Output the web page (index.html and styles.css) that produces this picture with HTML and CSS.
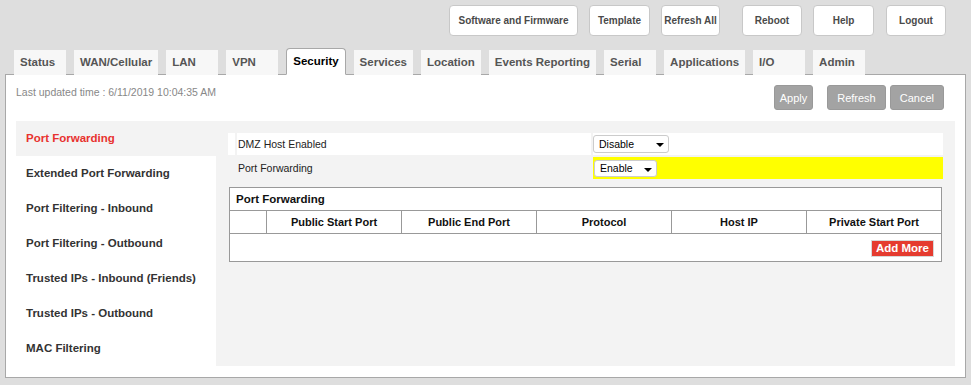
FILE: index.html
```html
<!DOCTYPE html>
<html lang="en">
<head>
    <meta charset="UTF-8">
    <title>Security - Port Forwarding</title>
    <link rel="stylesheet" href="styles.css">
</head>
<body>
    <div class="topbar">
        <button class="top-btn firmware">Software and Firmware</button>
        <button class="top-btn">Template</button>
        <button class="top-btn narrow">Refresh All</button>
        <button class="top-btn spaced">Reboot</button>
        <button class="top-btn">Help</button>
        <button class="top-btn logout">Logout</button>
    </div>

    <div class="tabs">
        <a class="tab">Status</a>
        <a class="tab">WAN/Cellular</a>
        <a class="tab">LAN</a>
        <a class="tab">VPN</a>
        <a class="tab active">Security</a>
        <a class="tab">Services</a>
        <a class="tab">Location</a>
        <a class="tab">Events Reporting</a>
        <a class="tab">Serial</a>
        <a class="tab">Applications</a>
        <a class="tab">I/O</a>
        <a class="tab">Admin</a>
    </div>

    <div class="panel">
        <div class="panel-head">
            <span class="updated">Last updated time : 6/11/2019 10:04:35 AM</span>
            <div class="actions">
                <button class="act-btn apply">Apply</button>
                <button class="act-btn">Refresh</button>
                <button class="act-btn">Cancel</button>
            </div>
        </div>

        <div class="main">
            <ul class="sidenav">
                <li class="active">Port Forwarding</li>
                <li>Extended Port Forwarding</li>
                <li>Port Filtering - Inbound</li>
                <li>Port Filtering - Outbound</li>
                <li>Trusted IPs - Inbound (Friends)</li>
                <li>Trusted IPs - Outbound</li>
                <li>MAC Filtering</li>
            </ul>

            <div class="content">
                <div class="form-row">
                    <span class="cell pad white"></span>
                    <span class="cell label white">DMZ Host Enabled</span>
                    <span class="cell value white">
                        <span class="dropdown wide">Disable</span>
                    </span>
                </div>
                <div class="form-row">
                    <span class="cell pad"></span>
                    <span class="cell label">Port Forwarding</span>
                    <span class="cell value highlight">
                        <span class="dropdown small">Enable</span>
                    </span>
                </div>

                <table class="pf-table">
                    <colgroup>
                        <col class="col-first">
                        <col><col><col><col><col>
                    </colgroup>
                    <tr>
                        <th class="title" colspan="6">Port Forwarding</th>
                    </tr>
                    <tr class="head">
                        <th></th>
                        <th>Public Start Port</th>
                        <th>Public End Port</th>
                        <th>Protocol</th>
                        <th>Host IP</th>
                        <th>Private Start Port</th>
                    </tr>
                    <tr>
                        <td colspan="6" class="add-cell">
                            <button class="add-btn">Add More</button>
                        </td>
                    </tr>
                </table>
            </div>
        </div>
    </div>
</body>
</html>
```

FILE: styles.css
```css
* {
    margin: 0;
    padding: 0;
    box-sizing: border-box;
}

body {
    font-family: 'Liberation Sans', Arial, sans-serif;
    background: #dedede;
    color: #333;
}

/* top buttons */
.topbar {
    display: flex;
    justify-content: flex-end;
    gap: 11px;
    padding: 5px 25px 0 0;
}

.top-btn {
    height: 31px;
    width: 61px;
    padding: 0;
    background: #fff;
    border: 1px solid #c8c8c8;
    border-radius: 4px;
    font-family: inherit;
    font-size: 10px;
    font-weight: 700;
    color: #4a4a4a;
}

.top-btn.firmware {
    width: 129px;
}

.top-btn.narrow {
    width: 59px;
}

.top-btn.spaced {
    width: 60px;
    margin-left: 11px;
}

.top-btn.logout {
    width: 60px;
    margin-left: 1px;
}

/* tabs */
.tabs {
    display: flex;
    align-items: flex-end;
    gap: 8px;
    margin: 12px 0 -1px 14px;
    position: relative;
    z-index: 1;
}

.tab {
    height: 25px;
    min-width: 52px;
    padding: 0 6px;
    line-height: 25px;
    background: #f7f7f7;
    color: #555;
    font-size: 11.5px;
    font-weight: 700;
}

.tab.active {
    height: 27px;
    line-height: 25px;
    background: #fff;
    color: #000;
    border: 1px solid #a8a8a8;
    border-bottom: 1px solid #fff;
    border-radius: 4px 4px 0 0;
}

/* panel */
.panel {
    margin: 0 5px 7px 5px;
    height: 304px;
    background: #fff;
    border: 1px solid #a8a8a8;
    padding: 0 10px 10px 10px;
}

.panel-head {
    height: 46px;
    display: flex;
    justify-content: space-between;
    align-items: flex-start;
    padding: 8px 11px 0 0;
}

.updated {
    font-size: 10.5px;
    color: #888;
    line-height: 18px;
}

.actions {
    display: flex;
    gap: 4px;
    margin-top: 2px;
}

.act-btn {
    height: 25px;
    padding: 0 9px;
    background: #a3a3a3;
    border: 1px solid #999;
    border-radius: 3px;
    font-family: inherit;
    font-size: 11px;
    color: #fff;
}

.act-btn.apply {
    padding: 0 5px;
    margin-right: 10px;
}

/* main area */
.main {
    display: flex;
    height: 245px;
    background: #f3f3f3;
}

.sidenav {
    list-style: none;
    width: 200px;
    flex-shrink: 0;
}

.sidenav li {
    height: 35px;
    line-height: 35px;
    padding-left: 10px;
    background: #fff;
    font-size: 11.5px;
    font-weight: 700;
    color: #333;
}

.sidenav li.active {
    background: #f3f3f3;
    color: #e8322f;
}

.content {
    flex: 1;
    padding: 12px;
}

.form-row {
    display: grid;
    grid-template-columns: 7px 354px 1fr;
    gap: 2px;
    height: 22px;
    margin-bottom: 2px;
}

.cell {
    display: flex;
    align-items: center;
    font-size: 10.5px;
    color: #222;
}

.cell.label {
    padding-left: 1px;
}

.cell.white {
    background: #fff;
}

.cell.highlight {
    background: #ffff00;
}

.dropdown {
    position: relative;
    display: block;
    width: 63px;
    height: 18px;
    line-height: 16px;
    padding-left: 5px;
    background: #fff;
    border: 1px solid #ccc;
    border-radius: 3px;
    font-size: 10.5px;
    color: #000;
}

.dropdown.wide {
    width: 76px;
}

.dropdown.small {
    height: 17px;
    line-height: 15px;
    margin-left: 1px;
}

.dropdown::after {
    content: "";
    position: absolute;
    right: 4px;
    top: 7px;
    border-left: 4px solid transparent;
    border-right: 4px solid transparent;
    border-top: 4px solid #000;
}

/* table */
.pf-table {
    width: 713px;
    margin: 8px 0 0 1px;
    border-collapse: collapse;
    table-layout: fixed;
    background: #fff;
    border: 1px solid #999;
}

.pf-table .col-first {
    width: 37px;
}

.pf-table th {
    height: 23px;
    font-size: 11px;
    font-weight: 700;
    color: #111;
    border: 1px solid #999;
}

.pf-table th.title {
    text-align: left;
    padding-left: 6px;
    font-size: 11.5px;
}

.add-cell {
    height: 28px;
    text-align: right;
    padding-right: 7px;
    vertical-align: top;
    padding-top: 4px;
}

.add-btn {
    height: 17px;
    padding: 0 4px;
    background: #e53b2f;
    border: 1px solid #d8d8d8;
    color: #fff;
    font-family: inherit;
    font-size: 11.5px;
    font-weight: 700;
}
```
